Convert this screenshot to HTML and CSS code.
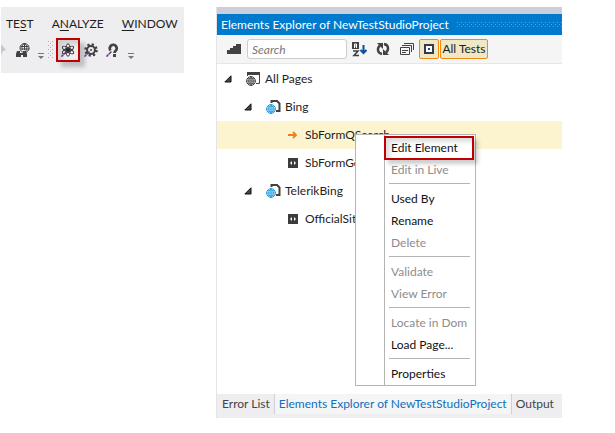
FILE: index.html
```html
<!DOCTYPE html>
<html lang="en">
<head>
<meta charset="utf-8">
<title>Elements Explorer</title>
<link rel="stylesheet" href="styles.css">
</head>
<body>
<svg class="defs" aria-hidden="true">
  <defs>
    <symbol id="globe" viewBox="0 0 10 10"><circle cx="5" cy="5" r="4.4" fill="#fff" stroke="currentColor"/><path d="M5 .5v9M.5 5h9M1.200 2.800h7.600M1.200 7.200h7.600M5 .6C2 2.800 2 7.200 5 9.400M5 .6C8 2.800 8 7.200 5 9.400" fill="none" stroke="currentColor" stroke-width=".9"/></symbol>
    <symbol id="page" viewBox="0 0 16 16"><path d="M5.500 4V2H11l2.500 2.500V12H10" fill="none" stroke="#424242" stroke-width="2"/><use href="#globe" x="0" y="5" width="10" height="10" color="#1b9ad8"/></symbol>
    <symbol id="code" viewBox="0 0 10 10"><path d="M0 0h10v10H0z" fill="#3c3c3c"/><path d="M4 3 2 5l2 2zM6 3l2 2-2 2z" fill="#fff"/></symbol>
    <symbol id="tri" viewBox="0 0 8 8"><path d="M7 .8v6.200H.8z" fill="#444" stroke="#111"/></symbol>
    <symbol id="over" viewBox="0 0 6 6"><path d="M0 0h6v1H0zM0 3h6L3 6z" fill="#777"/></symbol>
    <symbol id="pen" viewBox="0 0 7 7"><path d="M0 7 1 4l2 2zM2 4l3-3 1 1-3 3z" fill="#68368c"/></symbol>
  </defs>
</svg>
<main class="screen">
  <section class="ide">
    <nav class="menubar">
      <a href="#">TE<u>S</u>T</a><a href="#">A<u>N</u>ALYZE</a><a href="#"><u>W</u>INDOW</a>
    </nav>
    <div class="tools">
      <svg class="edge" viewBox="0 0 5 12"><path d="M0 0l5 6-3 1-2 4z" fill="#c6c6c9"/></svg>
      <button class="tool web" aria-label="Find on web"><svg width="14" height="14" viewBox="0 0 14 14"><g fill="none" stroke="#424242"><circle cx="8.500" cy="5" r="4.500"/><path d="M8.500 .5V7M4.500 3.500h8M4.500 6h9M8.500 .5c-3 2-3 4-2 6M8.500 .5c3 2 3 5 1 8"/></g><path d="M0 14v-3l1-3h3v2h3V8h3l1 3v3H7v-2H5v2z" fill="#424242"/></svg></button>
      <svg class="over" viewBox="0 0 6 6"><use href="#over"/></svg>
      <span class="grip"></span>
      <button class="tool marked" aria-label="Elements"><svg width="14" height="14" viewBox="0 0 14 14"><g fill="none" stroke="#333"><ellipse cx="7" cy="7" rx="2.200" ry="6.300"/><ellipse cx="7" cy="7" rx="2.200" ry="6.300" transform="rotate(60 7 7)"/><ellipse cx="7" cy="7" rx="2.200" ry="6.300" transform="rotate(120 7 7)"/></g><circle cx="7" cy="7" r="2" fill="#222"/><use href="#pen" x="0" y="7" width="7" height="7"/></svg></button>
      <button class="tool" aria-label="Settings"><svg width="14" height="14" viewBox="0 0 14 14"><circle cx="7" cy="7" r="5.500" fill="none" stroke="#424242" stroke-width="2.500" stroke-dasharray="2.200 2.120"/><circle cx="7" cy="7" r="3.900" fill="none" stroke="#424242" stroke-width="2"/><circle cx="7" cy="7" r="1" fill="#424242"/><use href="#pen" x="0" y="7" width="7" height="7"/></svg></button>
      <button class="tool" aria-label="Help"><svg width="14" height="14" viewBox="0 0 14 14"><path d="M4.500 7.500a3.500 3.500 0 1 1 5 .5c-.8.6-1 1-1 2" fill="none" stroke="#424242" stroke-width="2.700"/><path d="M7 11h3v3H7z" fill="#424242"/><use href="#pen" x="0" y="7" width="7" height="7"/></svg></button>
      <svg class="over" viewBox="0 0 6 6"><use href="#over"/></svg>
    </div>
  </section>
  <section class="explorer">
    <div class="strip"></div>
    <header class="title"><h1>Elements Explorer of NewTestStudioProject</h1><span class="dots"></span></header>
    <div class="bar">
      <button class="icon levels" aria-label="Levels"><svg width="14" height="10" viewBox="0 0 14 10"><path d="M0 10V6h3V4h3V2h3V0h5v10z" fill="#424242"/></svg></button>
      <input class="search" type="search" placeholder="Search" aria-label="Search">
      <button class="icon" aria-label="Sort"><svg width="15" height="15" viewBox="0 0 15 15"><path d="M0 0h7v7H0z" fill="#424242"/><path d="M2.500 6V2h2v4M2.500 4h2" fill="none" stroke="#fff"/><path d="M1 9h5l-4 4.500h5" fill="none" stroke="#424242" stroke-width="1.600"/><path d="M11.500 3v8M8.500 8l3 3 3-3" fill="none" stroke="#0e4fa0" stroke-width="2"/></svg></button>
      <button class="icon" aria-label="Refresh"><svg width="14" height="14" viewBox="0 0 14 14"><g fill="none" stroke="#424242" stroke-width="2.400"><path d="M6 12C1 11 1 6 4 3.500"/><path d="M8 2c5 1 5 6 2 8.500"/></g><path d="M1 1h6v6zM13 13H7V7z" fill="#424242"/></svg></button>
      <button class="icon" aria-label="Collapse all"><svg width="14" height="14" viewBox="0 0 14 14"><path d="M4 1.500h9.500V8M2 3.500h9.500V10M.5 5.500h9v7h-9zM2 8.500h6M2 10.500h4" fill="none" stroke="#424242"/></svg></button>
      <div class="toggles"><button class="toggle square" aria-label="Show all elements"><svg width="10" height="10" viewBox="0 0 10 10"><path d="M1 1h8v8H1z" fill="#fff" stroke="#333b4c" stroke-width="2"/><path d="M4 4h2v2H4z" fill="#0e4fa0"/></svg></button><button class="toggle">All Tests</button></div>
    </div>
    <div class="body">
      <ul class="tree">
        <li class="row"><svg class="tri"><use href="#tri"/></svg><svg class="kind" viewBox="0 0 16 16"><path d="M1.500 5V1.500h12v11H10" fill="none" stroke="#424242"/><path d="M1 1h13v3H1z" fill="#424242"/><use href="#globe" x="0" y="5" width="10" height="10" color="#424242"/></svg>All Pages</li>
        <li class="row two"><svg class="tri"><use href="#tri"/></svg><svg class="kind"><use href="#page"/></svg>Bing</li>
        <li class="row three selected"><svg class="leaf" viewBox="0 0 10 10"><path d="M0 5h8M5 2l3 3-3 3" fill="none" stroke="#ef7d22" stroke-width="1.800"/></svg>SbFormQSearch</li>
        <li class="row three"><svg class="leaf"><use href="#code"/></svg>SbFormGo</li>
        <li class="row two"><svg class="tri"><use href="#tri"/></svg><svg class="kind"><use href="#page"/></svg>TelerikBing</li>
        <li class="row three"><svg class="leaf"><use href="#code"/></svg>OfficialSite</li>
      </ul>
      <div class="menu" role="menu">
        <button class="item hot" role="menuitem">Edit Element</button>
        <button class="item" role="menuitem" disabled>Edit in Live</button>
        <hr>
        <button class="item" role="menuitem">Used By</button>
        <button class="item" role="menuitem">Rename</button>
        <button class="item" role="menuitem" disabled>Delete</button>
        <hr>
        <button class="item" role="menuitem" disabled>Validate</button>
        <button class="item" role="menuitem" disabled>View Error</button>
        <hr>
        <button class="item" role="menuitem" disabled>Locate in Dom</button>
        <button class="item" role="menuitem">Load Page...</button>
        <hr>
        <button class="item" role="menuitem">Properties</button>
      </div>
    </div>
    <nav class="tabs"><a href="#">Error List</a><a href="#" class="current">Elements Explorer of NewTestStudioProject</a><a href="#">Output</a></nav>
  </section>
</main>
</body>
</html>
```
FILE: styles.css
```css
* { box-sizing: border-box; }
body { margin: 0; background: #fff; color: #1e1e1e; font: 12px/16px Lato, "Noto Sans", sans-serif; }
button, input { font: inherit; color: inherit; margin: 0; }
button { border: 0; padding: 0; background: none; }
a { color: inherit; text-decoration: none; }
svg { display: block; flex: none; }
.defs { position: absolute; width: 0; height: 0; }

.screen { display: grid; grid-template-columns: minmax(0, 183fr) minmax(0, 346fr); column-gap: 32px; align-items: start; padding: 7px 53px 0 1px; }

.ide { background: #eeeef1; padding-bottom: 8px; }
.menubar { display: flex; gap: 18px; padding: 9px 0 0 5px; }
.menubar u { text-underline-offset: 2px; }
.tools { display: flex; align-items: center; height: 31px; margin-top: 2px; }
.edge { width: 5px; height: 12px; }
.tool { display: grid; place-items: center; width: 22px; height: 24px; }
.web { margin-left: 6px; }
.over { width: 6px; height: 6px; margin: 12px 4px 0; }
.grip { width: 5px; height: 18px; margin-right: 3px; background: linear-gradient(#aaa, #aaa) 0 0 / 1px 1px; background: conic-gradient(from 270deg at 1px 1px, #aaa 90deg, transparent 0) 0 0 / 4px 4px, conic-gradient(from 270deg at 1px 1px, #aaa 90deg, transparent 0) 2px 2px / 4px 4px; }
.marked { width: 24px; border: 2px solid #c00000; box-shadow: 5px 5px 4px #0003, inset 4px 4px 4px #0002; }

.explorer { border-left: 1px solid #e4e4e8; }
.strip { height: 7px; background: #cccedb; }
.title { display: flex; align-items: center; gap: 8px; height: 21px; padding-left: 4px; background: #007acc; color: #fff; }
h1 { margin: 0; font: inherit; white-space: nowrap; }
.dots { flex: 1; height: 5px; background: conic-gradient(from 270deg at 1px 1px, #59a8de 90deg, transparent 0) 0 0 / 4px 4px, conic-gradient(from 270deg at 1px 1px, #59a8de 90deg, transparent 0) 2px 2px / 4px 4px; }
.bar { display: flex; align-items: center; height: 29px; padding-left: 10px; background: #f5f5f5; border-bottom: 1px solid #e6e6e6; }
.icon { display: grid; place-items: center; flex: none; width: 24px; height: 22px; }
.levels { width: 14px; margin-right: 6px; }
.search { width: 100px; height: 20px; padding: 0 4px; border: 1px solid #ccc; border-radius: 3px; background: #fff; }
.search::placeholder { color: #777; font-style: italic; opacity: 1; }
.toggles { display: flex; gap: 1px; }
.toggle { min-width: 48px; height: 20px; border: 1px solid #ee8b10; border-radius: 2px; background: #efe7c5; white-space: nowrap; }
.square { display: grid; place-items: center; min-width: 20px; }

.body { position: relative; height: 330px; }
.tree { list-style: none; margin: 0; padding: 1px 0 0; }
.row { display: flex; align-items: center; height: 28px; padding-left: 7px; }
.two { padding-left: 27px; }
.three { padding-left: 71px; }
.selected { background: #fcf3cf; }
.tri { width: 8px; height: 8px; margin-right: 14px; }
.kind { width: 16px; height: 16px; margin-right: 3px; }
.leaf { width: 10px; height: 10px; margin-right: 7px; }

.menu { position: absolute; left: 138px; top: 70px; width: 121px; padding: 1px 0 0 28px; border: 1px solid #b4b4b4; background: linear-gradient(#b4b4b4, #b4b4b4) 28px 0 / 1px 100% no-repeat #fff; }
.item { display: block; width: 100%; height: 22px; padding-left: 7px; text-align: left; color: #111; white-space: nowrap; }
.item:disabled { color: #8c8c8c; }
.hot { width: 90px; height: 24px; margin-bottom: -1px; padding-left: 5px; border: 2px solid #c00000; box-shadow: 4px 4px 4px #0003, inset 4px 4px 4px #0002; }
.menu hr { height: 1px; margin: 2px 5px 4px 5px; border: 0; background: #b4b4b4; }

.tabs { display: flex; align-items: center; height: 24px; padding-left: 1px; background: #eeeef1; color: #444; white-space: nowrap; }
.tabs a { height: 20px; margin-bottom: 4px; padding: 2px 4px; border-right: 1px solid #cccedb; }
.tabs a:last-child { border: 0; }
.tabs .current { background: #f5f5f5; color: #0e70c0; }
```
